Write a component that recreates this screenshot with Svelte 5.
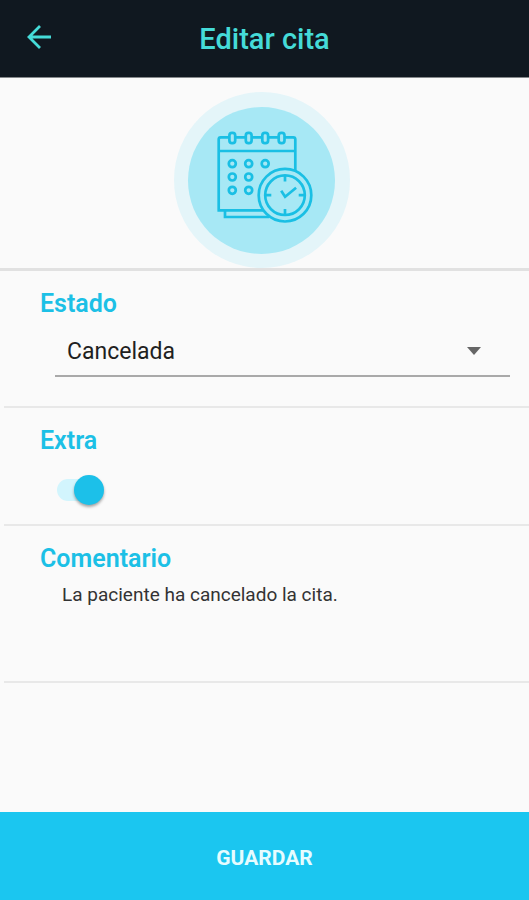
<script>
  const states = ['Cancelada', 'Pendiente', 'Confirmada'];
  let status = $state('Cancelada');
  let extra = $state(true);
  let comment = $state('La paciente ha cancelado la cita.');

  const rings = [58.3, 74.7, 91.2, 107.6];
  const dots = [
    [58.3, 71.7], [74.7, 71.7], [91.2, 71.7],
    [58.3, 85], [74.7, 85],
    [58.3, 98.3], [74.7, 98.3]
  ];
</script>

<form class="screen" onsubmit={(e) => e.preventDefault()}>
  <header>
    <button class="back" type="button" aria-label="Volver">
      <svg viewBox="0 0 24 24" width="24" height="24" fill="none" stroke="currentColor" stroke-width="2.8">
        <path d="M24 12H2M13 1L2 12l11 11" />
      </svg>
    </button>
    <h1>Editar cita</h1>
  </header>

  <div class="hero">
    <svg viewBox="0 0 176 176" width="176" height="176" aria-hidden="true">
      <circle cx="88" cy="88" r="88" fill="#e4f5f9" />
      <circle cx="87.5" cy="88.5" r="73.5" fill="#a7e8f5" />
      <g fill="none" stroke="#1abfe4" stroke-width="2.7">
        <path d="M51 118.3V125H95" />
        <path d="M44.7 118.3V47.3q0-2 2-2H119.3q2 0 2 2V85M43.4 118.3H92M44.7 59H121.3" />
        {#each rings as x}
          <rect x={x - 2.9} y="40.8" width="5.8" height="10.4" rx="2.6" fill="#a7e8f5" />
        {/each}
        {#each dots as [x, y]}
          <circle cx={x} cy={y} r="3.5" />
        {/each}
        <circle cx="111" cy="103.2" r="26.3" fill="#a7e8f5" />
        <circle cx="111" cy="103.2" r="19.8" />
        <path d="M111 84v5.5M111 117v5.5M91.8 103.2h5.5M124.7 103.2h5.5" />
        <path d="M107.2 98.8l3.9 6 11-9" />
      </g>
    </svg>
  </div>

  <section>
    <label class="title" for="status">Estado</label>
    <div class="picker">
      <select id="status" bind:value={status}>
        {#each states as s}
          <option>{s}</option>
        {/each}
      </select>
      <svg class="caret" viewBox="0 0 14 8" width="14" height="8" aria-hidden="true">
        <path d="M0 0h14L7 8z" fill="#666" />
      </svg>
    </div>
  </section>

  <section>
    <label class="title" for="extra">Extra</label>
    <input id="extra" class="switch" type="checkbox" role="switch" bind:checked={extra} />
  </section>

  <section>
    <label class="title" for="comment">Comentario</label>
    <textarea id="comment" rows="3" bind:value={comment}></textarea>
  </section>

  <button class="save" type="submit">GUARDAR</button>
</form>

<style>
  :global(body) {
    margin: 0;
    background: #fafafa;
  }
  .screen {
    display: flex;
    flex-direction: column;
    min-height: 100vh;
    background: #fafafa;
    font-family: Roboto, 'Liberation Sans', sans-serif;
  }
  button, select, textarea {
    font-family: inherit;
    border: 0;
    border-radius: 0;
    margin: 0;
    padding: 0;
    background: none;
  }
  header {
    display: grid;
    grid-template-columns: 78px 1fr 78px;
    align-items: center;
    height: 77px;
    background: #101820;
    border-bottom: 1px solid #85888b;
    color: #45dbd8;
  }
  .back {
    display: flex;
    justify-content: center;
    align-items: center;
    height: 74px;
    align-self: start;
    color: inherit;
  }
  h1 {
    margin: 0;
    font-size: 29px;
    line-height: 36px;
    font-weight: 500;
    text-align: center;
  }
  .hero {
    display: flex;
    justify-content: center;
    padding: 14px 6px 0 0;
    border-bottom: 3px solid #e1e1e1;
  }
  .hero svg {
    display: block;
  }
  section {
    display: flex;
    flex-direction: column;
    margin-left: 4px;
    padding: 17px 19px 0 36px;
    border-bottom: 2px solid #e8e8e8;
  }
  .title {
    align-self: flex-start;
    font-size: 25px;
    line-height: 32px;
    font-weight: 600;
    color: #1cc0e6;
  }
  .picker {
    display: flex;
    align-items: center;
    position: relative;
    margin: 7px 0 29px 15px;
    border-bottom: 2px solid #a9a9a9;
  }
  select {
    appearance: none;
    flex: 1;
    height: 48px;
    padding: 0 48px 0 12px;
    font-size: 23px;
    color: #1f1f1f;
  }
  .caret {
    position: absolute;
    right: 29px;
    pointer-events: none;
  }
  .switch {
    appearance: none;
    display: flex;
    align-items: center;
    position: relative;
    width: 47px;
    height: 32px;
    margin: 17px 0 18px 17px;
  }
  .switch::before {
    content: '';
    width: 42px;
    height: 22px;
    border-radius: 11px;
    background: #d2f5fd;
  }
  .switch::after {
    content: '';
    position: absolute;
    left: 0;
    width: 30px;
    height: 30px;
    border-radius: 50%;
    background: #eee;
    box-shadow: 0 2px 3px rgba(0, 0, 0, 0.35);
  }
  .switch:checked::after {
    left: auto;
    right: 0;
    background: #1cc0e9;
  }
  textarea {
    height: 96px;
    margin: 4px 0 6px 22px;
    font-size: 19px;
    line-height: 32px;
    color: #333;
    resize: none;
    overflow: hidden;
  }
  .save {
    height: 88px;
    margin-top: auto;
    padding: 4px 0 0;
    background: #1bc6f0;
    color: #e6fcff;
    font-size: 21px;
    font-weight: 700;
  }
</style>
